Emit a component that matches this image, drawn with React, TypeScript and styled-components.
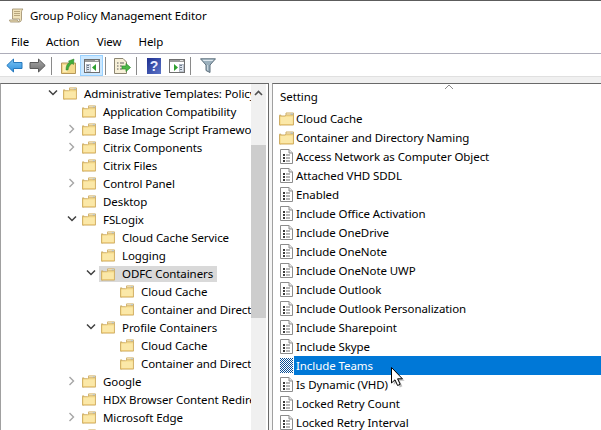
import React from "react";
import styled, { createGlobalStyle } from "styled-components";

const Global = createGlobalStyle`
  html, body { margin: 0; padding: 0; background: #fff; }
  body { width: 601px; height: 430px; overflow: hidden; }
  * { box-sizing: border-box; }
`;

const Shell = styled.div`
  position: relative;
  width: 601px;
  height: 430px;
  overflow: hidden;
  display: flex;
  flex-direction: column;
  background: #fff;
  color: #000;
  font-family: "Noto Sans", "Open Sans", sans-serif;
  font-size: 11.5px;
  letter-spacing: -0.08px;
  border-top: 1px solid #5c5c5c;
`;
const TitleBar = styled.div`
  height: 29px;
  display: flex;
  align-items: center;
  padding-left: 9px;
  gap: 6px;
`;
const MenuBar = styled.div`
  height: 24px;
  display: flex;
  align-items: center;
  padding-left: 11px;
  padding-bottom: 1px;
  gap: 17px;
  border-bottom: 1px solid #adadb9;
`;
const MenuItem = styled.span`
  display: block;
`;
const Toolbar = styled.div`
  height: 22px;
  display: flex;
  align-items: center;
  padding-left: 3px;
`;
const ToolButton = styled.div<{ $active?: boolean }>`
  width: 23px;
  height: 21px;
  margin-top: 1px;
  display: flex;
  align-items: center;
  justify-content: center;
  background: ${(p) => (p.$active ? "#cce8ff" : "transparent")};
  border: 1px solid ${(p) => (p.$active ? "#99d1ff" : "transparent")};
`;
const ToolSep = styled.div`
  width: 1px;
  height: 18px;
  margin: 1px 5px 0 2px;
  background: #8a8a8a;
`;
const Strip = styled.div`
  height: 7px;
  background: #f0f0f0;
  border-top: 1px solid #e0e0e0;
`;
const Panes = styled.div`
  flex: 1;
  min-height: 0;
  display: flex;
  background: #f5f5f5;
`;
const TreePane = styled.div`
  width: 269px;
  display: flex;
  background: #fff;
  border-top: 1px solid #696969;
  border-left: 1px solid #a0a0a0;
  border-right: 1px solid #696969;
`;
const Tree = styled.div`
  flex: 1;
  min-width: 0;
  overflow: hidden;
`;
const TreeRow = styled.div<{ $level: number }>`
  height: 18px;
  display: flex;
  align-items: center;
  white-space: nowrap;
  padding-left: ${(p) => 43 + p.$level * 19}px;
`;
const ChevronSlot = styled.div`
  width: 19px;
  flex: none;
  display: flex;
  justify-content: center;
  padding-right: 1px;
`;
const TreeIcon = styled.div`
  width: 14px;
  height: 13px;
  flex: none;
  display: flex;
  margin-top: 1px;
`;
const TreeLabel = styled.span<{ $selected?: boolean }>`
  display: block;
  line-height: 16px;
  margin-left: ${(p) => (p.$selected ? 0 : 7)}px;
  padding: 1px 4px 0 0;
`;
const SelectedGroup = styled.div`
  display: flex;
  align-items: center;
  height: 16px;
  margin-left: -2px;
  margin-top: 1px;
  padding-left: 2px;
  gap: 7px;
  background: #d9d9d9;
`;
const ScrollBar = styled.div`
  width: 15px;
  flex: none;
  margin-right: 2px;
  background: #f0f0f0;
`;
const ScrollUp = styled.div`
  height: 18px;
  display: flex;
  align-items: center;
  justify-content: center;
`;
const ScrollThumb = styled.div`
  height: 173px;
  margin-top: 43px;
  background: #cdcdcd;
`;
const ListPane = styled.div`
  flex: 1;
  min-width: 0;
  margin-left: 3px;
  background: #fff;
  overflow: hidden;
  border-top: 1px solid #696969;
  border-left: 1px solid #a0a0a0;
`;
const ListHeader = styled.div`
  position: relative;
  height: 25px;
  display: flex;
  align-items: center;
  padding: 0 0 0 7px;
`;
const SortCaret = styled.div`
  position: absolute;
  left: 171px;
  top: 0;
  display: flex;
`;
const ListRow = styled.div`
  height: 19px;
  display: flex;
  align-items: center;
  padding-left: 5px;
  white-space: nowrap;
`;
const ListIcon = styled.div`
  width: 16px;
  height: 15px;
  flex: none;
  display: flex;
  align-items: center;
  justify-content: center;
`;
const ListLabel = styled.div<{ $selected?: boolean }>`
  flex: 1;
  height: 19px;
  line-height: 18px;
  padding: 1px 0 0 2px;
  background: ${(p) => (p.$selected ? "#0078d7" : "transparent")};
  color: ${(p) => (p.$selected ? "#fff" : "#000")};
`;
const Pointer = styled.div`
  position: absolute;
  left: 390px;
  top: 365px;
  display: flex;
`;

const FolderIcon = ({ w = 14, h = 13 }: { w?: number; h?: number }) => (
  <svg width={w} height={h} viewBox="0 0 15 13">
    <path d="M0.5 2.5 H2 V12.5 H0.5Z" fill="#e8c878" stroke="#c8a860" strokeWidth="0.6" />
    <path d="M7 0.5 H14.5 V4 H7Z" fill="#fff6d8" stroke="#cfae66" />
    <path d="M11.5 1 H14 V2.5 H11.5Z" fill="#a9c6e6" />
    <path d="M0.5 3.5 H6 L7.5 2.5 H14.5 V12.5 H0.5Z" fill="#f8de90" stroke="#cfae66" />
    <path d="M2 4.5 H13.5 V11.5 H2Z" fill="#fbe8a8" />
    <path d="M1 11.5 H14 V12 H1Z" fill="#e5bf66" />
  </svg>
);
const PolicyIcon = () => (
  <svg width="13" height="15" viewBox="0 0 13 15">
    <path d="M0.5 0.5 H9 L12.5 4 V14.5 H0.5Z" fill="#fff" stroke="#8c8c8c" />
    <path d="M9 0.5 V4 H12.5" fill="#e8e8e8" stroke="#8c8c8c" />
    <path d="M3 5 H5 V7 H3Z M3 8 H5 V10 H3Z M3 11 H5 V13 H3Z" fill="#3c3c3c" />
    <path d="M6 6 H10 M6 9 H10 M6 12 H10" stroke="#6e6e6e" />
  </svg>
);
const DitherIcon = () => (
  <svg width="13" height="15" viewBox="0 0 13 15" shapeRendering="crispEdges">
    <defs>
      <pattern id="dith" width="2" height="2" patternUnits="userSpaceOnUse">
        <rect width="2" height="2" fill="#fff" />
        <rect width="1" height="1" fill="#0a4f96" />
        <rect x="1" y="1" width="1" height="1" fill="#0a4f96" />
      </pattern>
    </defs>
    <rect width="13" height="15" fill="url(#dith)" />
  </svg>
);
const ChevronRight = () => (
  <svg width="8" height="10" viewBox="0 0 8 10">
    <path d="M1.5 1 L5.5 5 L1.5 9" fill="none" stroke="#a6a6a6" strokeWidth="1.4" />
  </svg>
);
const ChevronDown = () => (
  <svg width="10" height="8" viewBox="0 0 10 8">
    <path d="M1 1.5 L5 5.5 L9 1.5" fill="none" stroke="#404040" strokeWidth="1.5" />
  </svg>
);
const ScrollArrow = () => (
  <svg width="9" height="6" viewBox="0 0 9 6">
    <path d="M1 5 L4.5 1.5 L8 5" fill="none" stroke="#505050" strokeWidth="1.6" />
  </svg>
);
const Caret = () => (
  <svg width="10" height="6" viewBox="0 0 10 6">
    <path d="M1 5 L5 1 L9 5" fill="none" stroke="#8a8a8a" strokeWidth="1" />
  </svg>
);
const ScrollLogo = () => (
  <svg width="15" height="15" viewBox="0 0 15 15">
    <path d="M3.5 1 H14 C13 2 12.5 3 12.5 4 V11 C12.5 13 11.5 14 10 14 H2 C1 14 0.5 13 0.5 12 H8.5 C8.5 13 9 13.5 9.5 13.5 C10.5 13.5 10.5 12 10.5 11 L3.5 11 Z"
      fill="#f0e2bb" stroke="#9a8a68" strokeWidth="0.8" />
    <path d="M5 3.5 H11 M5 5.5 H11 M5 7.5 H11" stroke="#b8a67e" />
  </svg>
);
const BackIcon = () => (
  <svg width="17" height="15" viewBox="0 0 17 15">
    <defs>
      <linearGradient id="bk" x1="0" y1="0" x2="0" y2="1">
        <stop offset="0" stopColor="#7cc4f5" />
        <stop offset="1" stopColor="#2c8fdc" />
      </linearGradient>
    </defs>
    <path d="M0.8 7.5 L7.5 1 V4.5 H16 V10.5 H7.5 V14 Z" fill="url(#bk)" stroke="#2678bd" strokeLinejoin="round" />
  </svg>
);
const ForwardIcon = () => (
  <svg width="17" height="15" viewBox="0 0 17 15">
    <defs>
      <linearGradient id="fw" x1="0" y1="0" x2="0" y2="1">
        <stop offset="0" stopColor="#a8a8a8" />
        <stop offset="1" stopColor="#6e6e6e" />
      </linearGradient>
    </defs>
    <path d="M16.2 7.5 L9.5 1 V4.5 H1 V10.5 H9.5 V14 Z" fill="url(#fw)" stroke="#5a5a5a" strokeLinejoin="round" />
  </svg>
);
const UpFolderIcon = () => (
  <svg width="15" height="16" viewBox="0 0 15 16">
    <path d="M0.5 5 H14.5 V15.5 H0.5Z" fill="#f4d98c" stroke="#b6985a" />
    <path d="M2 7 H9 L6 14 H2Z" fill="#fbeeb8" />
    <path d="M5 12 C5 8 6 5.5 8.5 4.5 L7.5 3 L13 1 L12.5 6.5 L11 5.5 C9 6.5 7.5 9 7 12Z" fill="#3fae3a" stroke="#2c7f2a" strokeWidth="0.5" />
  </svg>
);
const WinFrame = ({ children }: { children: React.ReactNode }) => (
  <svg width="16" height="14" viewBox="0 0 16 14" shapeRendering="crispEdges">
    <rect x="0.5" y="0.5" width="15" height="13" fill="#fff" stroke="#6f6f6f" />
    <rect x="1" y="1" width="14" height="2" fill="#9a9a9a" />
    <rect x="11" y="1" width="3" height="1" fill="#e0e0e0" />
    {children}
  </svg>
);
const TreeToggleIcon = () => (
  <WinFrame>
    <rect x="2" y="5" width="4" height="7" fill="#dfe6ef" stroke="#8a96a6" strokeWidth="0.6" />
    <rect x="3" y="6" width="2" height="1" fill="#6f7b8a" />
    <rect x="3" y="8" width="2" height="1" fill="#6f7b8a" />
    <rect x="3" y="10" width="2" height="1" fill="#6f7b8a" />
    <path d="M8 8.5 L12 5 V12 Z" fill="#2fa02f" shapeRendering="auto" />
  </WinFrame>
);
const ActionPaneIcon = () => (
  <WinFrame>
    <rect x="10" y="5" width="4" height="7" fill="#dfe6ef" stroke="#8a96a6" strokeWidth="0.6" />
    <rect x="11" y="6" width="2" height="1" fill="#6f7b8a" />
    <rect x="11" y="8" width="2" height="1" fill="#6f7b8a" />
    <rect x="11" y="10" width="2" height="1" fill="#6f7b8a" />
    <path d="M5 5 L9 8.5 L5 12 Z" fill="#2fa02f" shapeRendering="auto" />
  </WinFrame>
);
const ExportIcon = () => (
  <svg width="17" height="16" viewBox="0 0 17 16">
    <path d="M0.5 0.5 H9 L12.5 4 V15.5 H0.5Z" fill="#f7f0d8" stroke="#8c8672" />
    <path d="M3 5 H4.5 M6 5 H10 M3 8 H4.5 M6 8 H8 M3 11 H4.5 M6 11 H8" stroke="#5c5c5c" />
    <path d="M8 8 H12 V5.5 L16.5 9.5 L12 13.5 V11 H8Z" fill="#4cb848" stroke="#2d8a2c" strokeWidth="0.7" />
  </svg>
);
const HelpIcon = () => (
  <svg width="14" height="16" viewBox="0 0 14 16">
    <defs>
      <linearGradient id="hp" x1="0" y1="0" x2="1" y2="1">
        <stop offset="0" stopColor="#1f2f8f" />
        <stop offset="1" stopColor="#5a74c8" />
      </linearGradient>
    </defs>
    <rect width="14" height="16" fill="url(#hp)" />
    <text x="7" y="13" textAnchor="middle" fontFamily="Liberation Sans" fontWeight="700" fontSize="14" fill="#e8ecff">?</text>
  </svg>
);
const FilterIcon = () => (
  <svg width="16" height="15" viewBox="0 0 16 15">
    <path d="M0.5 0.8 H15.5 L10 7 V14.5 L6 12.5 V7 Z" fill="#9bb0bd" stroke="#5d6f7c" strokeLinejoin="round" />
    <path d="M2.5 1.8 H13.5 L12.5 3 H3.5 Z" fill="#dfe8ee" />
    <path d="M7 7 V12 L8 12.5 V7Z" fill="#c7d4dc" />
  </svg>
);
const CursorIcon = () => (
  <svg width="16" height="22" viewBox="0 0 16 22">
    <path d="M2.5 2.5 L2.5 18 L6 14.8 L8.6 20.5 L11.2 19.3 L8.6 13.8 L13.4 13.8 Z" fill="#000" fillOpacity="0.25" transform="translate(1.2 1)" />
    <path d="M1.5 1.5 L1.5 17 L5 13.8 L7.6 19.5 L10.2 18.3 L7.6 12.8 L12.4 12.8 Z" fill="#fff" stroke="#000" strokeWidth="1" />
  </svg>
);

type Node = { label: string; level: number; chev?: "r" | "d"; selected?: boolean };
const tree: Node[] = [
  { label: "Administrative Templates: Policy definitions", level: 0, chev: "d" },
  { label: "Application Compatibility", level: 1 },
  { label: "Base Image Script Framework", level: 1, chev: "r" },
  { label: "Citrix Components", level: 1, chev: "r" },
  { label: "Citrix Files", level: 1 },
  { label: "Control Panel", level: 1, chev: "r" },
  { label: "Desktop", level: 1 },
  { label: "FSLogix", level: 1, chev: "d" },
  { label: "Cloud Cache Service", level: 2 },
  { label: "Logging", level: 2 },
  { label: "ODFC Containers", level: 2, chev: "d", selected: true },
  { label: "Cloud Cache", level: 3 },
  { label: "Container and Directory Naming", level: 3 },
  { label: "Profile Containers", level: 2, chev: "d" },
  { label: "Cloud Cache", level: 3 },
  { label: "Container and Directory Naming", level: 3 },
  { label: "Google", level: 1, chev: "r" },
  { label: "HDX Browser Content Redirection", level: 1 },
  { label: "Microsoft Edge", level: 1, chev: "r" },
  { label: "", level: 1 },
];

const settings: { label: string; kind: "folder" | "policy" | "selected" }[] = [
  { label: "Cloud Cache", kind: "folder" },
  { label: "Container and Directory Naming", kind: "folder" },
  { label: "Access Network as Computer Object", kind: "policy" },
  { label: "Attached VHD SDDL", kind: "policy" },
  { label: "Enabled", kind: "policy" },
  { label: "Include Office Activation", kind: "policy" },
  { label: "Include OneDrive", kind: "policy" },
  { label: "Include OneNote", kind: "policy" },
  { label: "Include OneNote UWP", kind: "policy" },
  { label: "Include Outlook", kind: "policy" },
  { label: "Include Outlook Personalization", kind: "policy" },
  { label: "Include Sharepoint", kind: "policy" },
  { label: "Include Skype", kind: "policy" },
  { label: "Include Teams", kind: "selected" },
  { label: "Is Dynamic (VHD)", kind: "policy" },
  { label: "Locked Retry Count", kind: "policy" },
  { label: "Locked Retry Interval", kind: "policy" },
];

export default function App() {
  return (
    <Shell>
      <Global />
      <TitleBar>
        <ScrollLogo />
        <span>Group Policy Management Editor</span>
      </TitleBar>
      <MenuBar>
        <MenuItem>File</MenuItem>
        <MenuItem>Action</MenuItem>
        <MenuItem>View</MenuItem>
        <MenuItem>Help</MenuItem>
      </MenuBar>
      <Toolbar>
        <ToolButton><BackIcon /></ToolButton>
        <ToolButton><ForwardIcon /></ToolButton>
        <ToolSep />
        <ToolButton><UpFolderIcon /></ToolButton>
        <ToolButton $active><TreeToggleIcon /></ToolButton>
        <ToolSep />
        <ToolButton><ExportIcon /></ToolButton>
        <ToolSep />
        <ToolButton><HelpIcon /></ToolButton>
        <ToolButton><ActionPaneIcon /></ToolButton>
        <ToolSep />
        <ToolButton><FilterIcon /></ToolButton>
      </Toolbar>
      <Strip />
      <Panes>
        <TreePane>
          <Tree>
            {tree.map((n, i) => (
              <TreeRow key={i} $level={n.level}>
                <ChevronSlot>
                  {n.chev === "r" && <ChevronRight />}
                  {n.chev === "d" && <ChevronDown />}
                </ChevronSlot>
                {n.selected ? (
                  <SelectedGroup>
                    <TreeIcon><FolderIcon /></TreeIcon>
                    <TreeLabel $selected>{n.label}</TreeLabel>
                  </SelectedGroup>
                ) : (
                  <>
                    <TreeIcon><FolderIcon /></TreeIcon>
                    <TreeLabel>{n.label}</TreeLabel>
                  </>
                )}
              </TreeRow>
            ))}
          </Tree>
          <ScrollBar>
            <ScrollUp><ScrollArrow /></ScrollUp>
            <ScrollThumb />
          </ScrollBar>
        </TreePane>
        <ListPane>
          <ListHeader>
            <span>Setting</span>
            <SortCaret><Caret /></SortCaret>
          </ListHeader>
          {settings.map((s) => (
            <ListRow key={s.label}>
              <ListIcon>
                {s.kind === "folder" && <FolderIcon w={15} h={14} />}
                {s.kind === "policy" && <PolicyIcon />}
                {s.kind === "selected" && <DitherIcon />}
              </ListIcon>
              <ListLabel $selected={s.kind === "selected"}>{s.label}</ListLabel>
            </ListRow>
          ))}
        </ListPane>
      </Panes>
      <Pointer><CursorIcon /></Pointer>
    </Shell>
  );
}
